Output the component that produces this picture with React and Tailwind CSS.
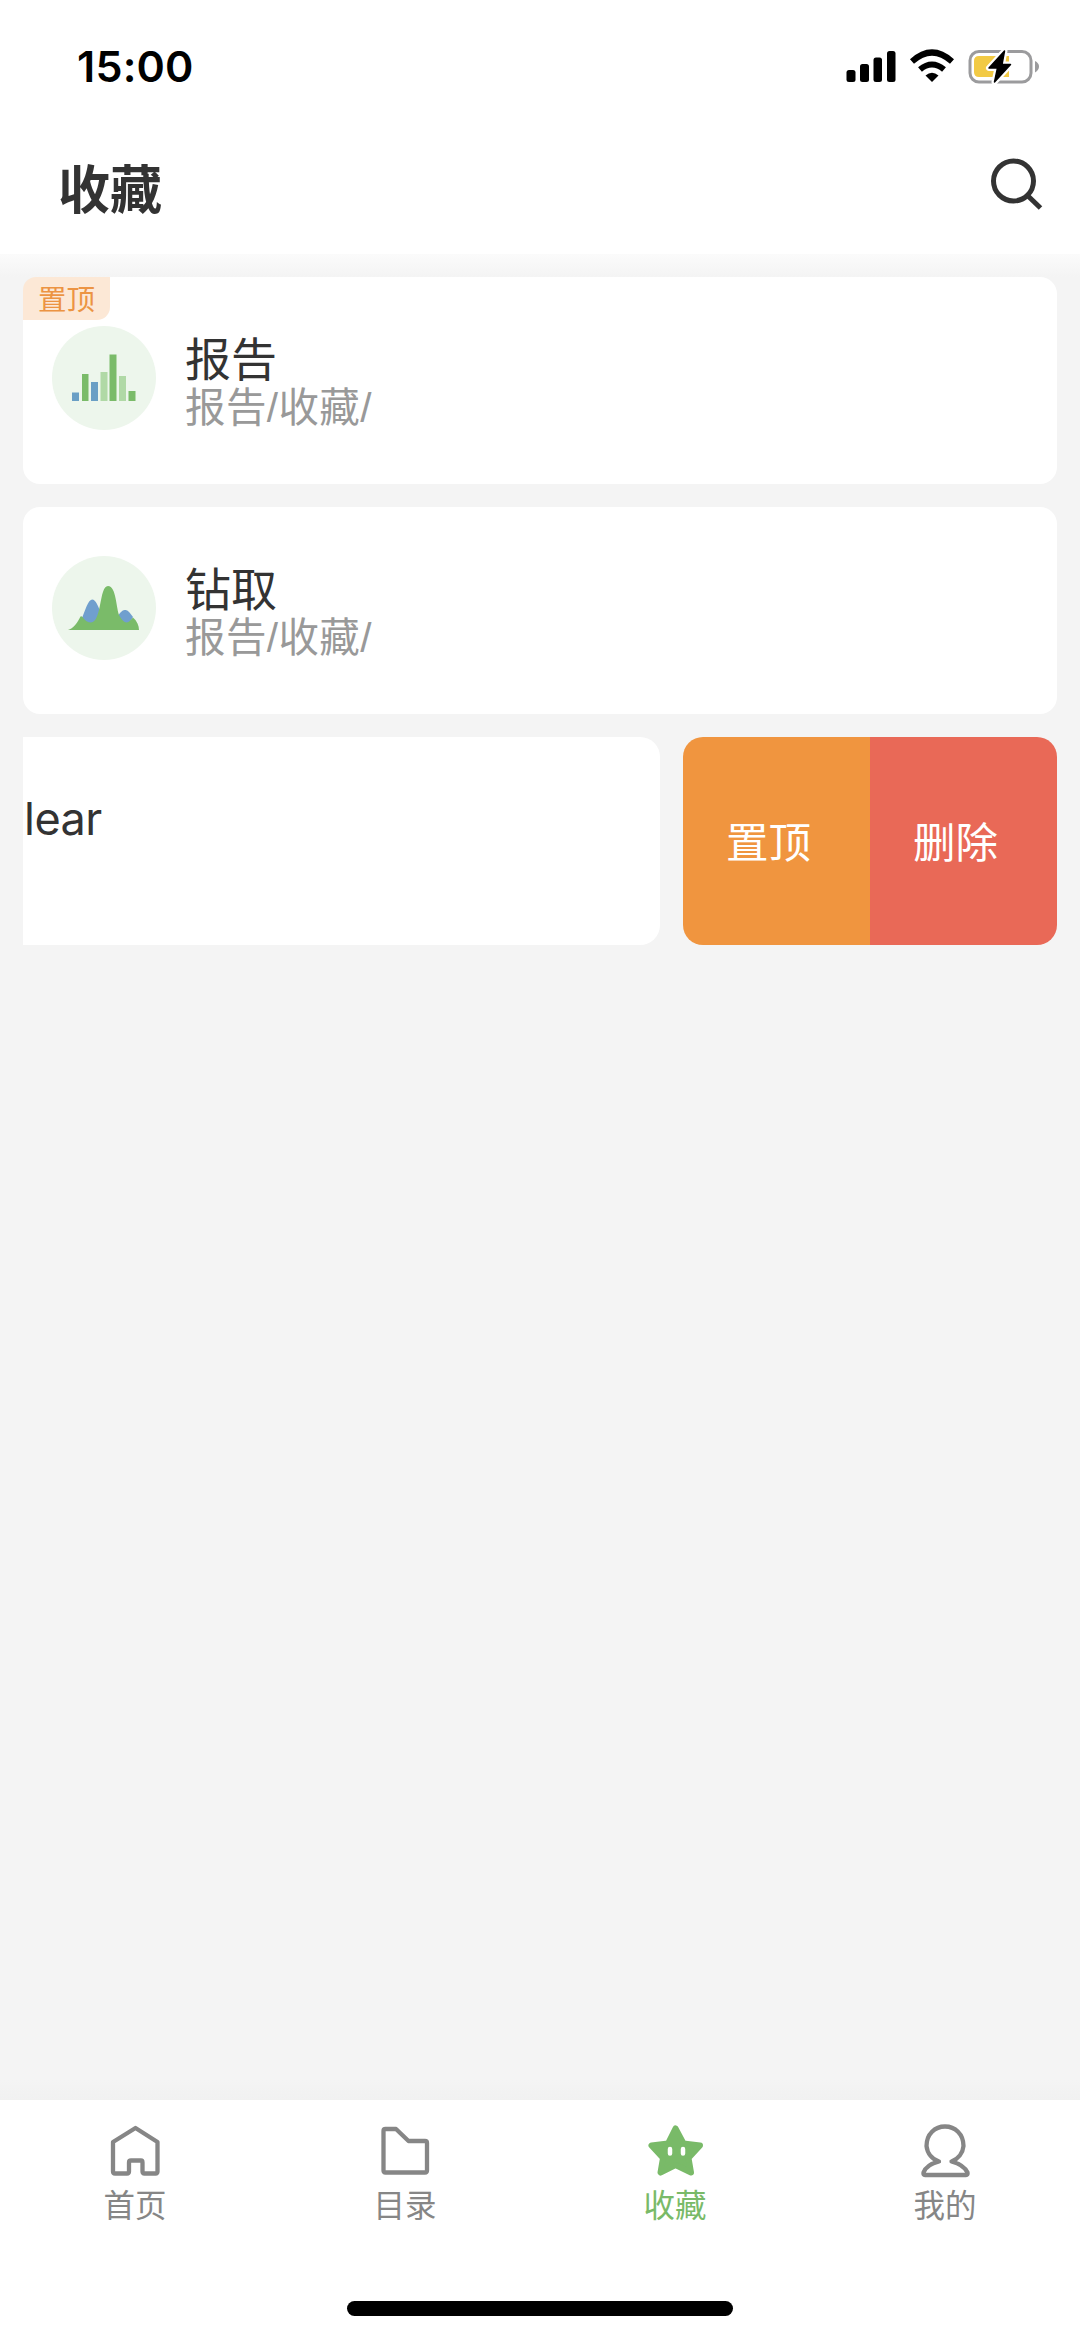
import clsx from 'clsx';

const favorites = [
  { id: 1, title: '报告', path: '报告/收藏/', icon: BarsIcon, pinned: true },
  { id: 2, title: '钻取', path: '报告/收藏/', icon: HillsIcon, pinned: false },
];

const tabs = [
  { label: '首页', icon: HomeIcon },
  { label: '目录', icon: FolderIcon },
  { label: '收藏', icon: StarIcon, active: true },
  { label: '我的', icon: UserIcon },
];

function BarsIcon() {
  return (
    <svg width="104" height="104" viewBox="0 0 104 104">
      <path d="M20 66.500h7V75h-7zM39 56h7v19h-7z" fill="#6a9fc5" />
      <path d="M30 48h6.500v27H30zM57.500 28.500h7V75h-7zM76.500 65h7v10h-7z" fill="#7abb69" />
      <path d="M48.500 46h7v29h-7zM67 50h7v25h-7z" fill="#b0d9a6" />
    </svg>
  );
}

function HillsIcon() {
  return (
    <svg width="104" height="104" viewBox="0 0 104 104">
      <path d="M30 62C33 55 36 44 40 43.500C44 43.500 46 50 49 57L44 69H33zM66 60C69 55 71 54 73.500 54C76 54 78 57 81 61L76 69H69z" fill="#709fce" />
      <path d="M16 74C21 73 26 66 28.500 60.500Q29.500 60 30.500 61C33 65 36 66.500 39 66.500C50 66 47 30 56 30C64.500 30 64 53 67.500 60C70 64 72 66.500 74.500 66.500C77.500 66.500 79 63 81 61.500C85 65 87 70 87 74z" fill="#7abb69" />
    </svg>
  );
}

function HomeIcon() {
  return (
    <svg width="60" height="64" viewBox="0 0 60 64" fill="none" stroke="currentColor" strokeWidth="4.300" strokeLinejoin="round">
      <path d="M30.500 14L52.500 28V57.500Q52.500 59.500 50.500 59.500H39.500Q37.500 59.500 37.500 57.500V48.500Q37.500 46.500 36 46.500H26Q24 46.500 24 48.500V57.500Q24 59.500 22 59.500H10Q8 59.500 8 57.500V28Z" />
    </svg>
  );
}

function FolderIcon() {
  return (
    <svg width="60" height="64" viewBox="0 0 60 64" fill="none" stroke="currentColor" strokeWidth="4.300" strokeLinejoin="round">
      <path d="M10.500 15H21L33.500 27H50Q52 27 52 29V56.500Q52 58.500 50 58.500H10.500Q8.500 58.500 8.500 56.500V17Q8.500 15 10.500 15Z" />
    </svg>
  );
}

function StarIcon() {
  return (
    <svg width="60" height="64" viewBox="0 0 60 64">
      <path
        d="M30.500 14.500L38.500 29.500L55 31.500L43.500 44L46 58.500L30.500 51L15.500 58.500L18 44L6.500 31.500L23 29.500Z"
        fill="currentColor" stroke="currentColor" strokeWidth="6" strokeLinejoin="round"
      />
      <path d="M25 35v4.500M38 35v4.500" stroke="white" strokeWidth="4.500" strokeLinecap="round" />
    </svg>
  );
}

function UserIcon() {
  return (
    <svg width="60" height="64" viewBox="0 0 60 64" fill="none" stroke="currentColor" strokeWidth="4.300" strokeLinejoin="round">
      <path d="M24 47.500A18.300 18.300 0 0 1 11.500 32C11.500 20 20 12.500 30 12.500S48.500 20 48.500 32A18.300 18.300 0 0 1 36.500 47.500C44 49.500 50 53 52.500 58.500Q53 61 51 61H10Q8 61 8.500 58.500C10.500 53 16 49.500 24 47.500Z" />
    </svg>
  );
}

function StatusBar() {
  return (
    <div className="flex h-[132px] items-center justify-between pl-[77px] pr-[40px]">
      <span className="font-['Inter'] text-[43px] font-semibold tracking-[0.2px] text-black">15:00</span>
      <div className="flex items-center">
        <svg width="194" height="40" viewBox="0 0 194 40">
          {/* signal */}
          <g fill="black">
            <rect x="0.500" y="24" width="9" height="12" rx="2.500" />
            <rect x="14" y="18" width="9" height="18" rx="2.500" />
            <rect x="27.500" y="11.500" width="8.500" height="24.500" rx="2.500" />
            <rect x="41" y="5" width="8.500" height="31" rx="2.500" />
          </g>
          {/* wifi */}
          <path d="M66 15.500Q86 -2.500 106 15.500" fill="none" stroke="black" strokeWidth="6" />
          <path d="M74 23.500Q86 13.500 98 23.500" fill="none" stroke="black" strokeWidth="6" />
          <path d="M79.500 29.500Q86 24 92.500 29.500L86 36Z" fill="black" />
          {/* battery */}
          <rect x="124" y="5.500" width="61" height="30.500" rx="9" fill="none" stroke="#9b9b9d" strokeWidth="3" />
          <path d="M189 15Q193 17 193 20.500T189 26.500Z" fill="#9b9b9d" />
          <path d="M133 10H163V31H133Q128 31 128 26V15Q128 10 133 10Z" fill="#f2ca45" />
          <path d="M158.500 5L143 22H151.500L148.500 36L164.500 18.500H156Z" fill="black" stroke="white" strokeWidth="6" strokeLinejoin="round" />
          <path d="M158.500 5L143 22H151.500L148.500 36L164.500 18.500H156Z" fill="black" stroke="black" strokeWidth="1.500" strokeLinejoin="round" />
        </svg>
      </div>
    </div>
  );
}

function Header() {
  return (
    <header className="h-[254px] shrink-0 bg-white">
      <StatusBar />
      <div className="flex h-[110px] items-center justify-between pl-[58px] pr-[37px]">
        <h1 className="text-[52px] font-bold leading-none text-[#333]">收藏</h1>
        <svg className="mb-[6px]" width="56" height="56" viewBox="0 0 56 56" fill="none" stroke="#333" strokeWidth="5">
          <circle cx="26.500" cy="25" r="20" />
          <path d="M40.500 39.500L53.500 52" />
        </svg>
      </div>
    </header>
  );
}

function FavoriteCard({ item }) {
  const Icon = item.icon;
  return (
    <div className="relative flex h-[207px] items-start rounded-[17px] bg-white pl-[29px] pt-[49px]">
      {item.pinned && (
        <span className="absolute left-0 top-0 flex h-[43px] w-[87px] items-center justify-center rounded-br-[13px] rounded-tl-[13px] bg-[#fce8d6] pb-px text-[28.500px] leading-none text-[#ec9443]">
          置顶
        </span>
      )}
      <div className="size-[104px] shrink-0 rounded-full bg-[#edf6ec]">
        <Icon />
      </div>
      <div className="ml-[29px] mt-[6px]">
        <div className="text-[46px] leading-[48px] text-[#333]">{item.title}</div>
        <div className="mt-1 font-['Liberation_Sans','Noto_Sans_CJK_SC',sans-serif] text-[40.500px] leading-[48px] tracking-[0.400px] text-[#999]">
          {item.path}
        </div>
      </div>
    </div>
  );
}

// Row swiped to the left, with its actions showing
function SwipedRow() {
  return (
    <div className="flex h-[208px] gap-[23px]">
      <div className="w-[637px] rounded-r-[20px] bg-white pl-px pt-[57px] font-['Inter'] text-[45px] leading-[50px] tracking-[-0.500px] text-[#333]">
        lear
      </div>
      <div className="flex flex-1 overflow-hidden rounded-[20px] text-[42.500px] text-white">
        <button className="flex flex-1 items-center bg-[#f0953f] pb-[3px] pl-[43px]">置顶</button>
        <button className="flex flex-1 items-center bg-[#e96957] pb-[3px] pl-[43px]">删除</button>
      </div>
    </div>
  );
}

function TabBar() {
  return (
    <nav className="flex h-[239px] shrink-0 flex-col items-center bg-white">
      <div className="flex h-[201px] w-full">
        {tabs.map(({ label, icon: Icon, active }) => (
          <div
            key={label}
            className={clsx('flex flex-1 flex-col items-center pt-[14px]', active ? 'text-[#79ba68]' : 'text-[#868686]')}
          >
            <Icon />
            <span className="mt-[5px] text-[31.500px] leading-[40px]">{label}</span>
          </div>
        ))}
      </div>
      <div className="h-[15px] w-[386px] rounded-full bg-black" />
    </nav>
  );
}

export default function App() {
  return (
    <div className="flex h-[2339px] w-[1080px] flex-col overflow-hidden bg-[#f4f4f4] font-['Noto_Sans_CJK_SC',sans-serif]">
      <Header />
      <div className="h-[23px] shrink-0 bg-gradient-to-b from-[#fbfbfb] to-[#f4f4f4]" />
      <main className="flex flex-1 flex-col gap-[23px] px-[23px]">
        {favorites.map((item) => (
          <FavoriteCard key={item.id} item={item} />
        ))}
        <SwipedRow />
      </main>
      <div className="h-[20px] shrink-0 bg-gradient-to-b from-[#f4f4f4] to-[#f1f1f1]" />
      <TabBar />
    </div>
  );
}
